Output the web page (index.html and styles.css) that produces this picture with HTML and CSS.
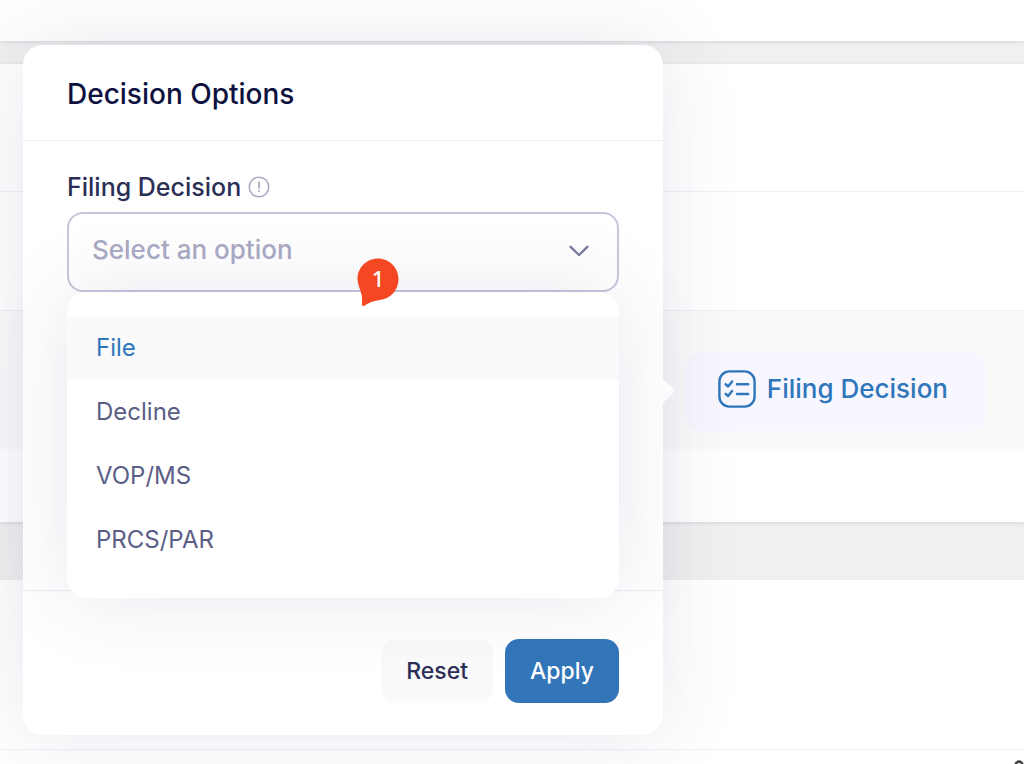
FILE: index.html
```html
<!DOCTYPE html>
<html lang="en">
<head>
<meta charset="utf-8">
<meta name="viewport" content="width=device-width, initial-scale=1">
<title>Decision Options</title>
<link rel="stylesheet" href="styles.css">
</head>
<body>
<div class="page">
  <div class="topbar"></div>
  <main class="card">
    <div class="row row-first"></div>
    <div class="row row-second"></div>
    <div class="row row-active">
      <button class="trigger" type="button">
        <svg class="trigger-icon" viewBox="0 0 38 38" fill="none" stroke="currentColor" stroke-width="2.4" stroke-linecap="round" stroke-linejoin="round" aria-hidden="true">
          <rect x="1.4" y="1.4" width="35.2" height="35.2" rx="10"/>
          <path d="M7.6 14.2l2.5 2.300 4-5M7.6 23.800l2.500 2.300 4-5M19 14.200h11.200M19 24h11.200"/>
        </svg>
        <span>Filing Decision</span>
      </button>
    </div>
    <div class="row row-last"></div>
  </main>
  <div class="lower"></div>
  <div class="footer-strip">
    <svg class="strip-icon" viewBox="0 0 10 10" fill="none" stroke="currentColor" stroke-width="2.6" aria-hidden="true"><circle cx="5" cy="5" r="3.4"/></svg>
  </div>

  <section class="popover" role="dialog" aria-labelledby="title">
    <header class="popover-header"><h1 class="title" id="title">Decision Options</h1></header>
    <div class="popover-body">
      <div class="label-line">
        <label class="label" for="decision">Filing Decision</label>
        <svg class="info" viewBox="0 0 22 22" fill="none" stroke="currentColor" stroke-width="1.5" stroke-linecap="round" aria-hidden="true">
          <circle cx="11" cy="11" r="9.8"/><path d="M11 6.300v5.600M11 15v.3" stroke-width="1.8"/>
        </svg>
      </div>
      <div class="field">
        <select class="select" id="decision"><option>Select an option</option></select>
        <svg class="chevron" viewBox="0 0 20 12" fill="none" stroke="currentColor" stroke-width="2.4" stroke-linecap="round" stroke-linejoin="round" aria-hidden="true"><path d="M1.6 1.800L10 10l8.400-8.200"/></svg>
        <ul class="menu" role="listbox" aria-label="Filing Decision">
          <li class="option option-active" role="option" aria-selected="true">File</li>
          <li class="option" role="option" aria-selected="false">Decline</li>
          <li class="option" role="option" aria-selected="false">VOP/MS</li>
          <li class="option" role="option" aria-selected="false">PRCS/PAR</li>
        </ul>
        <div class="marker">
          <svg class="marker-shape" viewBox="0 0 42 50" aria-hidden="true"><path d="M21 .5C9.600 .5 .5 9.600 .5 21c0 5.500 3.200 10.800 4.200 16.500.5 3 .5 5.500.2 8.500-.2 1.600 1 2.400 2.300 1.700 6-3.700 9.800-4.700 15.300-5.700C33 41 41.500 32.400 41.500 21 41.500 9.600 32.400 .5 21 .5z" fill="#f54822"/></svg>
          <span class="marker-text">1</span>
        </div>
      </div>
    </div>
    <footer class="popover-footer">
      <button class="button button-reset" type="button">Reset</button>
      <button class="button button-apply" type="button">Apply</button>
    </footer>
  </section>
</div>
</body>
</html>
```
FILE: styles.css
```css
* { box-sizing: border-box; }

body {
  margin: 0;
  font-family: Inter, "Liberation Sans", sans-serif;
  background: #f0f0f0;
  color: #2b2f56;
}

.page {
  position: relative;
  display: flex;
  flex-direction: column;
  min-height: 100vh;
  overflow: hidden;
}

.topbar {
  height: 41px;
  margin-bottom: 23px;
  background: #fff;
  box-shadow: 0 1px 4px rgba(60, 50, 80, 0.14);
}

.card {
  margin-bottom: 58px;
  background: #fff;
  box-shadow: 0 1px 4px rgba(60, 50, 80, 0.14);
}

.row-first { height: 128px; border-bottom: 1px solid #f0f0f5; }
.row-second { height: 119px; border-bottom: 1px solid #f0f0f5; }
.row-last { height: 73px; }

.row-active {
  display: flex;
  justify-content: flex-end;
  padding: 40px 38px 18px;
  background: #fafafa;
}

.trigger {
  display: flex;
  align-items: center;
  gap: 11px;
  height: 80px;
  padding: 0 38px 4px 32px;
  border: 0;
  border-radius: 16px;
  background: #f8f6fe;
  color: #2f76bb;
  font: 500 26px/32px Inter, "Liberation Sans", sans-serif;
}

.trigger-icon { width: 38px; height: 38px; }

.lower {
  flex: 1 0 169px;
  background: #fff;
}

.footer-strip {
  display: flex;
  justify-content: flex-end;
  height: 15px;
  padding-top: 10px;
  border-top: 1px solid #f0f0f5;
  background: #fff;
  color: #444;
}

.strip-icon { width: 10px; height: 10px; }

.popover {
  position: absolute;
  top: 45px;
  left: 23px;
  width: 640px;
  border-radius: 20px;
  background: #fff;
  box-shadow: 0 0 80px rgba(80, 60, 120, 0.13);
}

.popover::after {
  content: "";
  position: absolute;
  top: 334px;
  left: 100%;
  border: 12px solid transparent;
  border-right-width: 0;
  border-left-color: #fcfbfe;
}

.popover-header {
  padding: 33px 44px 30px;
  border-bottom: 1px solid #f0f0f5;
}

.title {
  margin: 0;
  font-size: 28px;
  line-height: 32px;
  font-weight: 550;
  color: #0d1140;
}

.popover-body {
  height: 450px;
  padding: 30px 44px 0;
  border-bottom: 1px solid #ececf2;
}

.label-line {
  display: flex;
  align-items: center;
  gap: 7px;
  height: 32px;
  margin-bottom: 9px;
}

.label { font-size: 25px; line-height: 32px; font-weight: 500; }
.info { width: 22px; height: 22px; color: #aaabc3; }
.field { position: relative; }

.select {
  display: block;
  width: 100%;
  height: 80px;
  padding: 0 60px 4px 23px;
  border: 2px solid #c6c6dc;
  border-radius: 16px;
  appearance: none;
  background: transparent;
  color: #a9aac3;
  font: 500 26px/32px Inter, "Liberation Sans", sans-serif;
}

.chevron {
  position: absolute;
  top: 33px;
  right: 30px;
  width: 20px;
  height: 12px;
  color: #787c9f;
  pointer-events: none;
}

.menu {
  position: absolute;
  top: 80px;
  left: 0;
  right: 0;
  margin: 0;
  padding: 24px 0 26px;
  list-style: none;
  border-radius: 20px;
  background: #fff;
  box-shadow: 0 0 80px rgba(80, 60, 120, 0.13);
}

.option {
  height: 64px;
  padding: 0 29px;
  font-size: 24px;
  line-height: 64px;
  color: #5a5e86;
}

.option-active { background: #fafafb; color: #2f76bb; }

.marker {
  position: absolute;
  top: 46px;
  left: 290px;
  width: 42px;
  height: 50px;
}

.marker-shape { display: block; width: 42px; height: 50px; }

.marker-text {
  position: absolute;
  top: 0;
  left: 0;
  width: 42px;
  font: 500 22px/40px "Noto Sans", sans-serif;
  text-align: center;
  color: #fff;
}

.popover-footer {
  display: flex;
  justify-content: flex-end;
  gap: 12px;
  padding: 48px 44px 32px;
}

.button {
  height: 64px;
  padding: 0 25px;
  border: 0;
  border-radius: 14px;
  font: 500 23px/32px Inter, "Liberation Sans", sans-serif;
}

.button-reset { background: #faf9fb; color: #2b2f56; }
.button-apply { background: #3375b9; color: #fff; }
```
